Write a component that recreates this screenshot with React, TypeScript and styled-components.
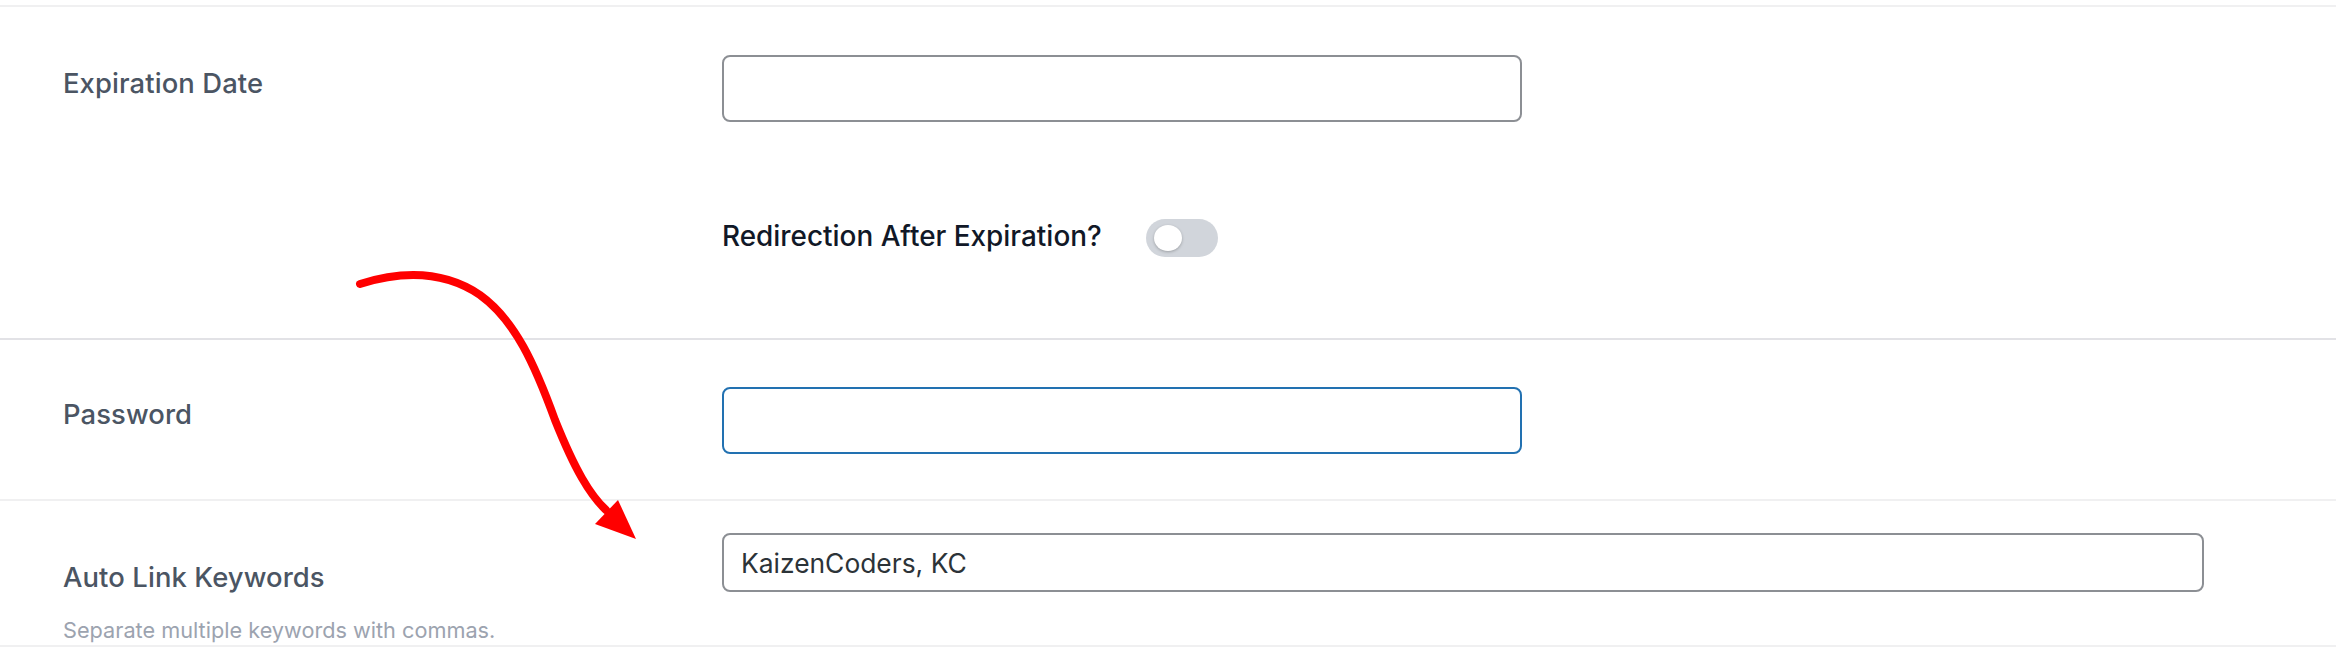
import React from "react";
import styled, { createGlobalStyle } from "styled-components";

const GlobalStyle = createGlobalStyle`
  html, body {
    margin: 0;
    padding: 0;
    background: #ffffff;
  }
  body {
    font-family: Inter, "Noto Sans", "Liberation Sans", sans-serif;
    -webkit-font-smoothing: antialiased;
  }
  * { box-sizing: border-box; }
`;

const Page = styled.div`
  position: relative;
  width: 2336px;
  height: 668px;
  padding-top: 5px;
  background: #ffffff;
  overflow: hidden;
`;

const Form = styled.div`
  border-top: 2px solid #f0f0f1;
  display: flex;
  flex-direction: column;
`;

const Row = styled.div<{ $top: number; $bottom: number; $line: string }>`
  display: grid;
  grid-template-columns: 722px 1fr;
  padding-top: ${(p) => p.$top}px;
  padding-bottom: ${(p) => p.$bottom}px;
  border-bottom: 2px solid ${(p) => p.$line};
`;

const LabelCol = styled.div<{ $offset: number }>`
  padding-left: 63px;
  padding-top: ${(p) => p.$offset}px;
  display: flex;
  flex-direction: column;
`;

const Label = styled.label`
  font-size: 27.4px;
  line-height: 34px;
  font-weight: 500;
  color: #4b5563;
  letter-spacing: 0.1px;
`;

const Description = styled.p`
  margin: 21px 0 0;
  font-size: 21.7px;
  line-height: 30px;
  font-weight: 400;
  color: #9ca3af;
`;

const FieldCol = styled.div`
  display: flex;
  flex-direction: column;
  align-items: flex-start;
`;

const TextInput = styled.input<{ $w: number; $h: number; $focused?: boolean }>`
  width: ${(p) => p.$w}px;
  height: ${(p) => p.$h}px;
  border: 2px solid ${(p) => (p.$focused ? "#2271b1" : "#8c8f94")};
  border-radius: 8px;
  background: #ffffff;
  padding: 0 17px;
  font-family: Inter, "Noto Sans", "Liberation Sans", sans-serif;
  font-size: 26.4px;
  color: #2c3338;
  outline: none;
`;

const ToggleRow = styled.div`
  margin-top: 97px;
  display: flex;
  align-items: center;
  gap: 44px;
  height: 38px;
`;

const ToggleText = styled.span`
  font-size: 27.9px;
  line-height: 34px;
  font-weight: 500;
  color: #111827;
  margin-top: -5px;
`;

const Switch = styled.span`
  position: relative;
  display: inline-block;
  width: 72px;
  height: 38px;
  border-radius: 19px;
  background: #d1d5db;
`;

const Knob = styled.span`
  position: absolute;
  top: 6px;
  left: 8px;
  width: 28px;
  height: 26px;
  border-radius: 50%;
  background: #ffffff;
  box-shadow: 0 1px 3px rgba(0, 0, 0, 0.25);
`;

const Annotation = styled.svg`
  position: absolute;
  left: 0;
  top: 0;
  pointer-events: none;
`;

export default function App() {
  return (
    <>
      <GlobalStyle />
      <Page>
        <Form>
          <Row $top={48} $bottom={81} $line="#e2e2e6">
            <LabelCol $offset={11}>
              <Label>Expiration Date</Label>
            </LabelCol>
            <FieldCol>
              <TextInput $w={800} $h={67} type="text" />
              <ToggleRow>
                <ToggleText>Redirection After Expiration?</ToggleText>
                <Switch>
                  <Knob />
                </Switch>
              </ToggleRow>
            </FieldCol>
          </Row>
          <Row $top={47} $bottom={45} $line="#f0f0f1">
            <LabelCol $offset={10}>
              <Label>Password</Label>
            </LabelCol>
            <FieldCol>
              <TextInput $w={800} $h={67} $focused type="password" />
            </FieldCol>
          </Row>
          <Row $top={32} $bottom={0} $line="#f0f0f1">
            <LabelCol $offset={27}>
              <Label>Auto Link Keywords</Label>
              <Description>Separate multiple keywords with commas.</Description>
            </LabelCol>
            <FieldCol>
              <TextInput $w={1482} $h={59} type="text" defaultValue="KaizenCoders, KC" />
            </FieldCol>
          </Row>
        </Form>
        <Annotation width="2336" height="668" viewBox="0 0 2336 668">
          <path
            d="M 360 284 C 395 273, 440 268, 480 295 C 515 320, 535 365, 555 420 C 575 470, 590 495, 606 510"
            fill="none"
            stroke="#ff0000"
            strokeWidth="8"
            strokeLinecap="round"
          />
          <polygon points="636,539 595,524 618,500" fill="#ff0000" />
        </Annotation>
      </Page>
    </>
  );
}
